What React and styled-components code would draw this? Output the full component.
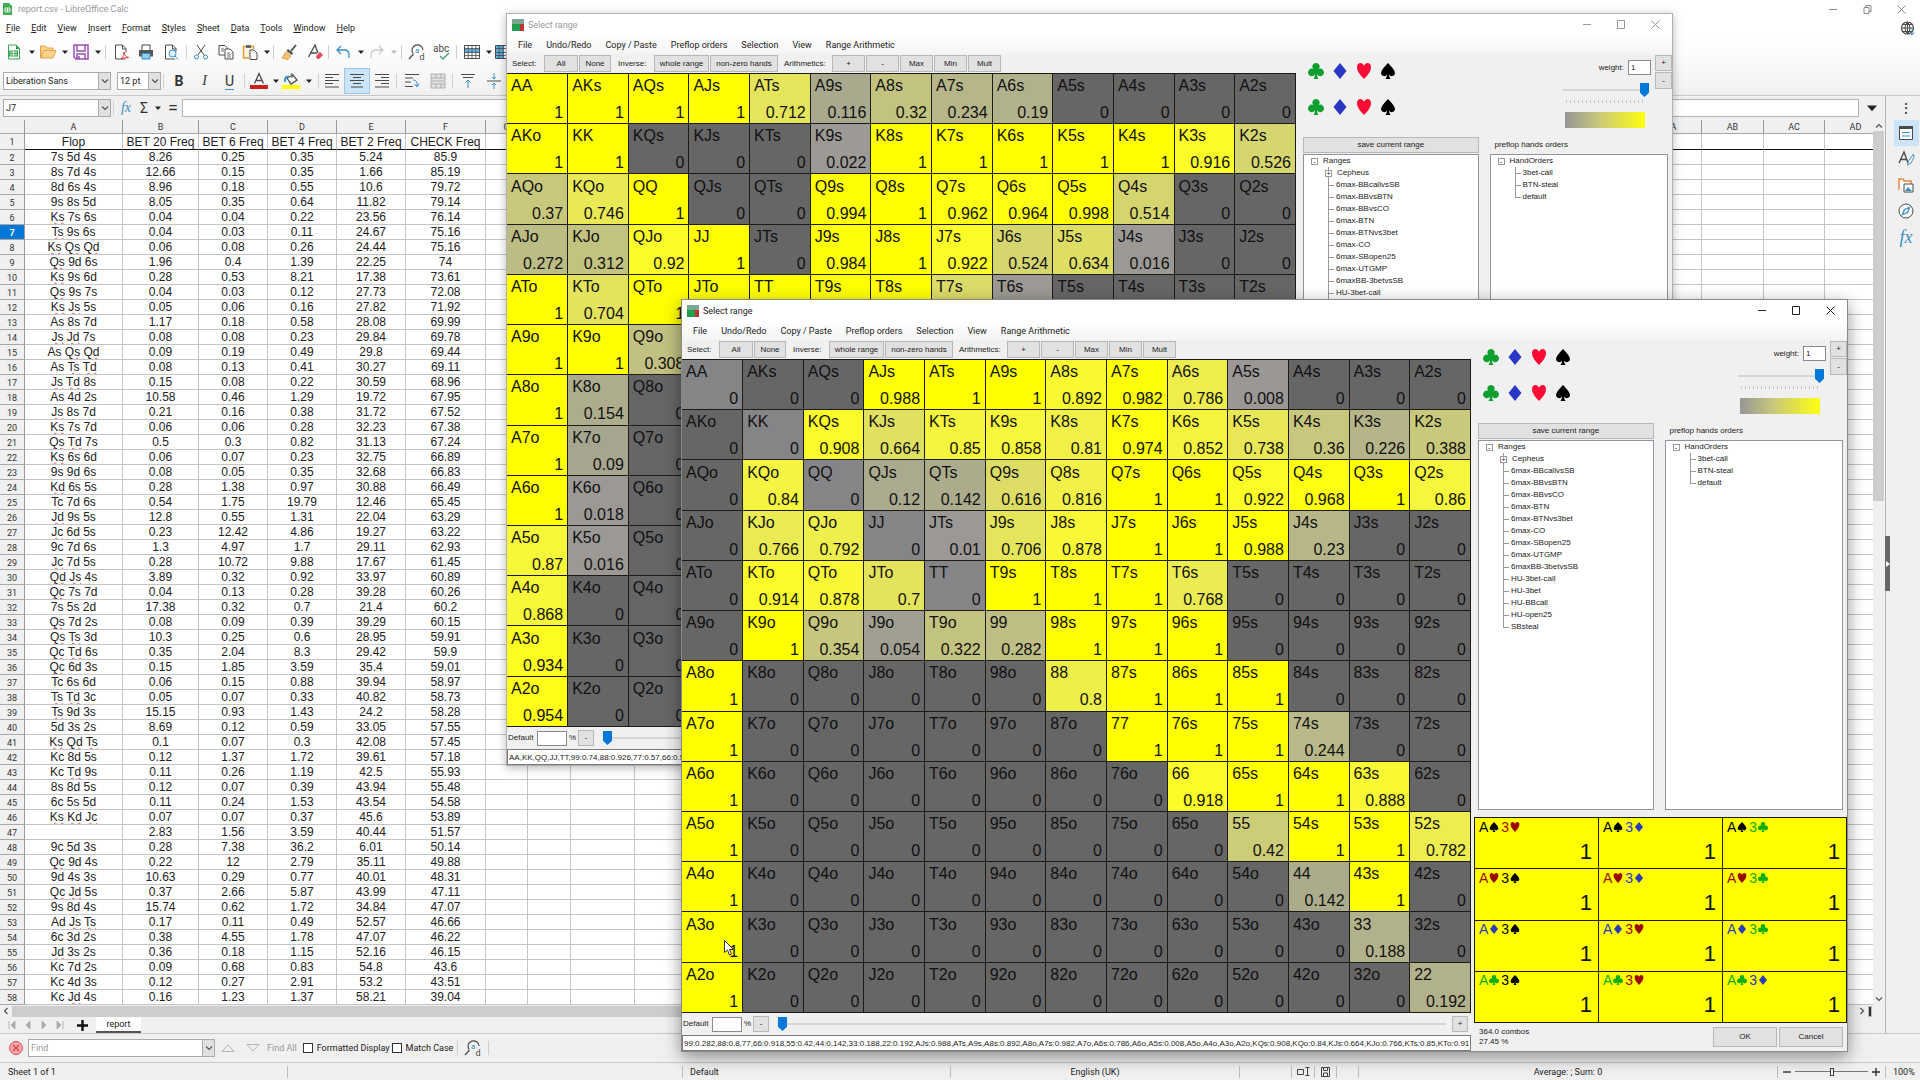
import React from "react";
import styled, { createGlobalStyle, css } from "styled-components";

const UI = `Roboto, "Open Sans", sans-serif`;
const ARIAL = `"Liberation Sans", Arial, sans-serif`;

const GlobalStyle = createGlobalStyle`
  *, *::before, *::after { box-sizing: border-box; }
  body { margin: 0; overflow: hidden; background: #f0f0f0; color: #222; font: 9px/12px ${UI}; }
  button, input, select { font: inherit; color: inherit; margin: 0; padding: 0; border-radius: 0; }
  button { background: none; border: 0; }
  svg { display: block; flex: none; }
  ul { list-style: none; margin: 0; padding: 0; }
`;

/* ---------- data ---------- */

const FLOPS = `7s 5d 4s|8.26|0.25|0.35|5.24|85.9
8s 7d 4s|12.66|0.15|0.35|1.66|85.19
8d 6s 4s|8.96|0.18|0.55|10.6|79.72
9s 8s 5d|8.05|0.35|0.64|11.82|79.14
Ks 7s 6s|0.04|0.04|0.22|23.56|76.14
Ts 9s 6s|0.04|0.03|0.11|24.67|75.16
Ks Qs Qd|0.06|0.08|0.26|24.44|75.16
Qs 9d 6s|1.96|0.4|1.39|22.25|74
Ks 9s 6d|0.28|0.53|8.21|17.38|73.61
Qs 9s 7s|0.04|0.03|0.12|27.73|72.08
Ks Js 5s|0.05|0.06|0.16|27.82|71.92
As 8s 7d|1.17|0.18|0.58|28.08|69.99
Js Jd 7s|0.08|0.08|0.23|29.84|69.78
As Qs Qd|0.09|0.19|0.49|29.8|69.44
As Ts Td|0.08|0.13|0.41|30.27|69.11
Js Td 8s|0.15|0.08|0.22|30.59|68.96
As 4d 2s|10.58|0.46|1.29|19.72|67.95
Js 8s 7d|0.21|0.16|0.38|31.72|67.52
Ks 7s 7d|0.06|0.06|0.28|32.23|67.38
Qs Td 7s|0.5|0.3|0.82|31.13|67.24
Ks 6s 6d|0.06|0.07|0.23|32.75|66.89
9s 9d 6s|0.08|0.05|0.35|32.68|66.83
Kd 6s 5s|0.28|1.38|0.97|30.88|66.49
Tc 7d 6s|0.54|1.75|19.79|12.46|65.45
Jd 9s 5s|12.8|0.55|1.31|22.04|63.29
Jc 6d 5s|0.23|12.42|4.86|19.27|63.22
9c 7d 6s|1.3|4.97|1.7|29.11|62.93
Jc 7d 5s|0.28|10.72|9.88|17.67|61.45
Qd Js 4s|3.89|0.32|0.92|33.97|60.89
Qc 7s 7d|0.04|0.13|0.28|39.28|60.26
7s 5s 2d|17.38|0.32|0.7|21.4|60.2
Qs 7d 2s|0.08|0.09|0.39|39.29|60.15
Qs Ts 3d|10.3|0.25|0.6|28.95|59.91
Qc Td 6s|0.35|2.04|8.3|29.42|59.9
Qc 6d 3s|0.15|1.85|3.59|35.4|59.01
Tc 6s 6d|0.06|0.15|0.88|39.94|58.97
Ts Td 3c|0.05|0.07|0.33|40.82|58.73
Ts 9d 3s|15.15|0.93|1.43|24.2|58.28
5d 3s 2s|8.69|0.12|0.59|33.05|57.55
Ks Qd Ts|0.1|0.07|0.3|42.08|57.45
Kc 8d 5s|0.12|1.37|1.72|39.61|57.18
Kc Td 9s|0.11|0.26|1.19|42.5|55.93
8s 8d 5s|0.12|0.07|0.39|43.94|55.48
6c 5s 5d|0.11|0.24|1.53|43.54|54.58
Ks Kd Jc|0.07|0.07|0.37|45.6|53.89
|2.83|1.56|3.59|40.44|51.57
9c 5d 3s|0.28|7.38|36.2|6.01|50.14
Qc 9d 4s|0.22|12|2.79|35.11|49.88
9d 4s 3s|10.63|0.29|0.77|40.01|48.31
Qc Jd 5s|0.37|2.66|5.87|43.99|47.11
9s 8d 4s|15.74|0.62|1.72|34.84|47.07
Ad Js Ts|0.17|0.11|0.49|52.57|46.66
6c 3d 2s|0.38|4.55|1.78|47.07|46.22
Jd 3s 2s|0.36|0.18|1.15|52.16|46.15
Kc 7d 2s|0.09|0.68|0.83|54.8|43.6
Kc 4d 3s|0.12|0.27|2.91|53.2|43.51
Kc Jd 4s|0.16|1.23|1.37|58.21|39.04`.split("\n").map((l) => l.split("|"));

const SHEET_COLUMNS = [
  ["A", 98], ["B", 76], ["C", 69], ["D", 69], ["E", 69], ["F", 80],
  ["G", 42], ["H", 43], ["I", 64], ["J", 61],
  ..."KLMNOPQRSTUVWXYZ".split("").map((c) => [c, 59]),
  ["AA", 62], ["AB", 62], ["AC", 61], ["AD", 62],
];
const HEADINGS = ["Flop", "BET 20 Freq", "BET 6 Freq", "BET 4 Freq", "BET 2 Freq", "CHECK Freq"];

const RANKS = "AKQJT98765432".split("");

const parse = (text) => text.trim().split("\n").map((l) => l.trim().split(/\s+/));

const BACK_RANGE = parse(`
1 1 1 1 0.712 0.116 0.32 0.234 0.19 0 0 0 0
1 1 0 0 0 0.022 1 1 1 1 1 0.916 0.526
0.37 0.746 1 0 0 0.994 1 0.962 0.964 0.998 0.514 0 0
0.272 0.312 0.92 1 0 0.984 1 0.922 0.524 0.634 0.016 0 0
1 0.704 1 1 1 1 1 0.6 0.02 0 0 0 0
1 1 0.308 0 0 0.74 1 1 0 0 0 0 0
1 0.154 0 0 0 0 0.926 1 1 0 0 0 0
1 0.09 0 0 0 0 0 0.57 1 1 0 0 0
1 0.018 0 0 0 0 0 0 0.5 1 1 0 0
0.87 0.016 0 0 0 0 0 0 0 0.4 1 1 0
0.868 0 0 0 0 0 0 0 0 0 0.3 1 0
0.934 0 0 0 0 0 0 0 0 0 0 0.2 0
0.954 0 0 0 0 0 0 0 0 0 0 0 0.2`);

const FRONT_RANGE = parse(`
0 0 0 0.988 1 1 0.892 0.982 0.786 0.008 0 0 0
0 0 0.908 0.664 0.85 0.858 0.81 0.974 0.852 0.738 0.36 0.226 0.388
0 0.84 0 0.12 0.142 0.616 0.816 1 1 0.922 0.968 1 0.86
0 0.766 0.792 0 0.01 0.706 0.878 1 1 0.988 0.23 0 0
0 0.914 0.878 0.7 0 1 1 1 0.768 0 0 0 0
0 1 0.354 0.054 0.322 0.282 1 1 1 0 0 0 0
1 0 0 0 0 0 0.8 1 1 1 0 0 0
1 0 0 0 0 0 0 1 1 1 0.244 0 0
1 0 0 0 0 0 0 0 0.918 1 1 0.888 0
1 0 0 0 0 0 0 0 0 0.42 1 1 0.782
1 0 0 0 0 0 0 0 0 0 0.142 1 0
1 0 0 0 0 0 0 0 0 0 0 0.188 0
1 0 0 0 0 0 0 0 0 0 0 0 0.192`);

const BACK_TEXT = "AA,KK,QQ,JJ,TT,99:0.74,88:0.926,77:0.57,66:0.5,55:0.4,44:0.3,33:0.2,22:0.2,AKs,AQs,AJs,ATs:0.712";
const FRONT_TEXT = "99:0.282,88:0.8,77,66:0.918,55:0.42,44:0.142,33:0.188,22:0.192,AJs:0.988,ATs,A9s,A8s:0.892,A8o,A7s:0.982,A7o,A6s:0.786,A6o,A5s:0.008,A5o,A4o,A3o,A2o,KQs:0.908,KQo:0.84,KJs:0.664,KJo:0.766,KTs:0.85,KTo:0.914,K9s:0.858,K9o";

const RANGES = ["6max-BBcallvsSB", "6max-BBvsBTN", "6max-BBvsCO", "6max-BTN", "6max-BTNvs3bet", "6max-CO", "6max-SBopen25", "6max-UTGMP", "6maxBB-3betvsSB", "HU-3bet-call", "HU-3bet", "HU-BBcall", "HU-open25", "SBsteal"];
const ORDERS = ["3bet-call", "BTN-steal", "default"];
const COMBOS = [["sh", "sd", "sc"], ["hs", "hd", "hc"], ["ds", "dh", "dc"], ["cs", "ch", "cd"]];

const STOPS = [[0, 154, 150, 150], [0.12, 170, 170, 142], [0.22, 180, 180, 138], [0.32, 195, 195, 128], [0.52, 214, 214, 112], [0.66, 224, 224, 98], [0.76, 234, 234, 84], [0.86, 246, 246, 60], [0.92, 252, 252, 40], [1, 255, 255, 0]];
function weightColor(v, pair) {
  if (v === 0) return pair ? "#858587" : "#666667";
  const i = Math.max(1, STOPS.findIndex((s) => s[0] >= v));
  const a = STOPS[i - 1];
  const b = STOPS[i];
  const t = (v - a[0]) / (b[0] - a[0]);
  const mix = [1, 2, 3].map((k) => Math.round(a[k] + (b[k] - a[k]) * t));
  return `rgb(${mix.join(",")})`;
}

/* ---------- drawings ---------- */

const SUIT_PATHS = {
  c: "M8 0a3.6 3.6 0 0 1 2.7 6A3.7 3.7 0 1 1 9 11.300q0 3.200 1.500 4.700h-5Q7 14.500 7 11.300A3.700 3.700 0 1 1 5.300 6 3.600 3.600 0 0 1 8 0z",
  d: "M8 0 14.500 8 8 16 1.500 8z",
  h: "M8 16Q1 9 1 4.500 1 0 4.500 0 7 0 8 2.800 9 0 11.500 0 15 0 15 4.500 15 9 8 16z",
  s: "M8 0Q15 7 15 10a3.200 3.200 0 0 1-6 1.500q0 3 1.600 4.500H5.400Q7 14.500 7 11.500A3.200 3.200 0 0 1 1 10Q1 7 8 0z",
};
const BRIGHT = { c: "#0f9f2f", d: "#2a36c4", h: "#fb0a34", s: "#000" };
const DARK = { c: "#0fae12", d: "#2a3cba", h: "#9c0a05", s: "#000" };

const Suit = ({ kind, size = 16, colors = BRIGHT }) => (
  <svg width={size} height={size} viewBox="0 0 16 16"><path d={SUIT_PATHS[kind]} fill={colors[kind]} /></svg>
);

const G = "#4a4a4a";
const B = "#3b8fc6";
const ICONS = {
  new: <><path d="M2.500 1h7.500l3.500 3.500v10.500h-11z" fill="#fff" stroke="#3aa655" /><path d="M10 1l4 4h-4z" fill="#2f9c4d" /><path d="M3 6.500h9v6H3z" fill="#3aa655" /><path d="M4 8.200h7M4 10.800h7M7.500 7v5" stroke="#fff" strokeWidth=".8" /></>,
  open: <path d="M.5 14V2h5l1.500 2h6v2.500M.5 14l3-7.500h12.500L13 14z" fill="#fbd28b" stroke="#e0a33f" />,
  save: <path d="M1 1h14v14H3l-2-2zM4 1v6h8V1M4 15v-5h8v5M6 12v3" fill="#fff" stroke="#9a4fb5" strokeWidth="1.500" />,
  pdf: <><path d="M12 15H2.500V1h7l3.500 3.500v4M9.500 1v4H13" fill="#fff" stroke={G} /><path d="M8 15c2-2 3.500-5 3-7 .3 3 2 5 4.500 5.500-3 0-5 .5-7.500 1.500z" fill="none" stroke="#d33" /></>,
  print: <><path d="M4 6V1h8v5" fill="#fff" stroke={G} /><path d="M1 6h14v6.500H1z" fill="#555" /><path d="M4 9.500h8V15H4z" fill="#8fd0f2" stroke={B} /></>,
  preview: <><path d="M12 15H2.500V1h7l3.500 3.500v3M9.500 1v4H13" fill="#fff" stroke={G} /><circle cx="9.500" cy="9.500" r="3.500" fill="#dff1fb" stroke={B} /><path d="M12 12l3 3.500" stroke={B} /></>,
  cut: <><path d="M4 1l7 10M12 1L5 11" stroke={G} fill="none" /><circle cx="3.500" cy="13" r="2" fill="none" stroke={B} /><circle cx="12.500" cy="13" r="2" fill="none" stroke={B} /></>,
  copy: <><path d="M1 1.500h6l2 2V11H1z" fill="#fff" stroke={G} /><path d="M7 5h5l3 3v7H7z" fill="#fff" stroke={G} /><path d="M9 9h3M9 11h4M9 13h4M3 5h3M3 7h3" stroke={G} strokeWidth=".8" /></>,
  paste: <><path d="M7 14H1.500V2.500h10V5" fill="#fdf0dc" stroke="#e09a3a" strokeWidth="1.400" /><path d="M4 1h5v3H4z" fill="#666" /><path d="M8 6h4l3 3v6.500H8z" fill="#fff" stroke={G} /></>,
  brush: <><path d="M15 1l-5 6" stroke={G} strokeWidth="1.800" /><path d="M7 5l5 4-1 2-5.500-4z" fill={G} /><path d="M5 8l5 4-3 3.500-6-1.500z" fill="#f7c277" stroke="#df9c3c" /></>,
  clear: <><path d="M1.500 13L8 1l3 8M4 9h6" stroke={G} fill="none" strokeWidth="1.300" /><path d="M9 12l4-4 3 3-4 4h-2z" fill="#e0485a" /></>,
  undo: <path d="M6 2L2 6l4 4M2 6h7q5 0 5 4.500V14" stroke={B} fill="none" strokeWidth="1.300" />,
  redo: <path d="M10 2l4 4-4 4M14 6H7q-5 0-5 4.500V14" stroke="#c9c9c9" fill="none" strokeWidth="1.300" />,
  find: <><path d="M4 9.500A5.500 5.500 0 1 1 14 6M4.500 10L0 15" stroke={G} fill="none" strokeWidth="1.200" /><text x="6" y="9" fontSize="8" fontFamily="Roboto" fill={B}>a</text><text x="10.500" y="16" fontSize="9" fontFamily="Roboto" fill={G}>d</text></>,
  spell: <><text x="-1" y="8" fontSize="10" fontFamily="Roboto" fill={G}>abc</text><path d="M6 12l3 3 6-6" stroke="#3aa67a" fill="none" strokeWidth="1.400" /></>,
  table: <><path d="M.5 1.500h15v13H.5z" fill="#fff" stroke={G} /><path d="M1 4.500h14v4H1z" fill="#5fb0e4" /><path d="M.5 4.500h15M.5 8.500h15M.5 11.500h15M4.200 1v13M8 1v13M11.800 1v13" stroke={G} strokeWidth=".8" /></>,
  column: <><path d="M.5 1.500h15v13H.5z" fill="#fff" stroke={G} /><path d="M1 2h8v12H1z" fill="#5fb0e4" /><path d="M.5 4.500h15M.5 8.500h15M.5 11.500h15M4.200 1v13M8 1v13M11.800 1v13" stroke={G} strokeWidth=".8" /></>,
  fontColor: <><path d="M3.500 10.500L8 .5l4.500 10M5 7.500h6" stroke={G} fill="none" strokeWidth="1.300" /><path d="M-1 12h18v4H-1z" fill="#c9211e" /></>,
  fill: <><path d="M4 5l6-3 4 5-6 4z" fill="#fff" stroke={G} strokeWidth="1.300" /><path d="M9 0v5" stroke={G} /><path d="M2 9q-1-6 4-5" stroke={B} fill="none" strokeWidth="2" /><path d="M-1 12h18v4H-1z" fill="#ff0" /></>,
  left: <path d="M1 1.500h14M1 4.500h8M1 7.500h14M1 10.500h8M1 14h14" stroke={G} />,
  center: <path d="M1 1.500h14M4 4.500h8M1 7.500h14M4 10.500h8M2 14h12" stroke={G} />,
  right: <path d="M1 1.500h14M7 4.500h8M1 7.500h14M7 10.500h8M1 14h14" stroke={G} />,
  wrap: <><path d="M1 1.500h14M1 5h8M1 9h6M1 13.500h8" stroke={G} /><path d="M9 7q5 0 4 6M10.500 11l2.500 3 2-3.500" stroke={B} fill="none" /></>,
  merge: <path d="M1 1h14v14H1zM1 5h14M1 11h14M6 1v4M11 1v4M6 11v4M11 11v4M2 8h12" stroke="#b0b0b0" fill="#e2e2e2" />,
  top: <><path d="M1 1.500h14M3 4.500h10" stroke={G} /><path d="M8 15V7M5.500 9.500L8 7l2.500 2.500" stroke={B} fill="none" /></>,
  middle: <><path d="M1 8h14" stroke={G} /><path d="M8 0v6M6 4l2 2 2-2M8 16v-6M6 12l2-2 2 2" stroke={B} fill="none" /></>,
  props: <><path d="M1.500 1.500h13v13h-13z" fill="#fff" stroke={G} /><path d="M1 1h14v3H1z" fill={G} /><path d="M4 7.500h8M4 11h8" stroke={B} /></>,
  styles: <><path d="M1 12L6 1l4 11M2.500 8.500h6" stroke={G} fill="none" strokeWidth="1.400" /><path d="M15.500 3l-5 7-1 4 3.500-2 3-6z" fill="#fff" stroke={B} /></>,
  gallery: <><path d="M1 13V2h4l1 2h7v3" fill="#fff" stroke="#e8823a" strokeWidth="1.400" /><path d="M6 7h9v8H6z" fill="#fff" stroke={G} /><path d="M7 14l3-4 4 4z" fill={B} /></>,
  compass: <><circle cx="8" cy="8" r="7" fill="#fff" stroke={G} /><path d="M11.500 4.500L9.500 9.500l-5 2 2-5z" fill="#fff" stroke={B} strokeWidth="1.300" /></>,
  globe: <><circle cx="7.500" cy="8" r="6" fill="none" stroke={G} strokeWidth="1.200" /><path d="M1.500 8h12M7.500 2v12M3 4.500h9M3 11.500h9M7.500 2q-5 6 0 12M7.500 2q5 6 0 12" stroke={G} fill="none" /><path d="M12 9v6M9.500 12.500L12 15l2.500-2.500" stroke={B} fill="none" /></>,
};
const Icon = ({ name, size = 16 }) => (
  <svg width={size} height={size} viewBox="0 0 16 16" fill="none" overflow="visible">{ICONS[name]}</svg>
);
const Caret = ({ color = "#222", size = 6 }) => (
  <svg width={size} height={size} viewBox="0 0 6 6"><path d="M0 1.500h6L3 5z" fill={color} /></svg>
);
const Chevron = ({ turn = 0, color = "#555" }) => (
  <svg width="8" height="8" viewBox="0 0 8 8"><path d="M1 2.500l3 3 3-3" transform={`rotate(${turn} 4 4)`} fill="none" stroke={color} strokeWidth="1.200" /></svg>
);
const WINDOW_GLYPHS = {
  min: "M0 4.500h8",
  max: "M.5.5h7v8h-7z",
  restore: "M1 2.500h5v6H1zM3 2.500V.5h5v6H6",
  close: "M.5.5l8 8M8.500.5l-8 8",
};
const WindowGlyph = ({ kind, color }) => (
  <svg width="9" height="9" viewBox="0 0 9 9"><path d={WINDOW_GLYPHS[kind]} fill="none" stroke={color} /></svg>
);

/* ---------- spreadsheet window ---------- */

const Page = styled.div`
  display: flex; flex-direction: column; height: 100vh; position: relative; overflow: hidden;
  background: #f0f0f0;
`;
const AppTitle = styled.header`
  display: flex; align-items: center; height: 18px; padding: 0 2px 0 3px; gap: 6px;
  background: #fff; color: #999;
`;
const Controls = styled.div`
  display: flex; margin-left: auto;
`;
const ControlButton = styled.button`
  width: 34px; height: 16px; display: grid; place-items: center;
`;
const AppMenu = styled.nav`
  display: flex; align-items: center; height: 19px; padding: 0 4px 0 6px; gap: 11px; background: #fff;
  & > :last-child { margin-left: auto; }
`;
const MenuButton = styled.button`
  line-height: 14px; white-space: nowrap;
  &::first-letter { text-decoration: ${(p) => (p.$mnemonic ? "underline" : "none")}; }
`;
const Toolbar = styled.div`
  display: flex; align-items: center; flex: none;
  height: ${(p) => p.$height}px;
  padding-left: ${(p) => p.$indent}px;
  background: ${(p) => p.$background};
  border-bottom: ${(p) => (p.$line ? "1px solid #c8c8c8" : "0")};
`;
const ToolButton = styled.button`
  flex: none; display: grid; place-items: center; height: 26px;
  width: ${(p) => p.$width}px;
  font-size: 14px;
  ${(p) => p.$active && css`background: #cce4f7; border: 1px solid #9cc8ea;`}
`;
const Divider = styled.span`
  flex: none; width: ${(p) => p.$width || 2}px; height: 14px;
  background: linear-gradient(#d0d0d0, #d0d0d0) center / 1px 100% no-repeat;
`;
const Spacer = styled.span`
  flex: none; width: ${(p) => p.$width}px;
`;
const Combo = styled.div`
  display: flex; flex: none; width: ${(p) => p.$width}px; height: 18px;
  margin-right: ${(p) => p.$after || 0}px;
  background: #fff; border: 1px solid #ababab; position: relative;
`;
const ComboField = styled.select`
  flex: 1; min-width: 0; appearance: none; border: 0; outline: 0; background: none; padding-left: 2px; font-size: 9px;
`;
const ComboInput = styled.input`
  flex: 1; min-width: 0; border: 0; outline: 0; background: none; padding-left: 2px; font-size: 9px;
  &::placeholder { color: #999; }
`;
const ComboArrow = styled.span`
  width: 12px; display: grid; place-items: center; background: #e1e1e1; border-left: 1px solid #ababab;
  pointer-events: none;
`;
const Letter = styled.span`
  font-size: ${(p) => (p.$large ? 18 : 14)}px; line-height: 16px;
  font-weight: ${(p) => (p.$bold ? 700 : 400)};
  font-style: ${(p) => (p.$italic ? "italic" : "normal")};
  font-family: ${(p) => (p.$serif ? `"Liberation Serif", serif` : UI)};
  color: ${(p) => p.$color || "#333"};
  border-bottom: ${(p) => (p.$under ? "1px solid #3b8fc6" : "0")};
`;
const Workspace = styled.main`
  flex: 1; min-height: 0; display: flex;
`;
const SheetColumn = styled.section`
  flex: 1; min-width: 0; display: flex; flex-direction: column;
`;
const FormulaBar = styled.div`
  display: flex; align-items: center; height: 24px; padding-left: 3px; flex: none;
`;
const FormulaInput = styled.input`
  flex: 1; height: 18px; border: 1px solid #b4b4b4; background: #fff; outline: 0;
`;
const GridRow = styled.div`
  flex: 1; min-height: 0; display: flex;
`;
const GridClip = styled.div`
  flex: 1; min-width: 0; overflow: hidden; background: #fff;
`;
const Sheet = styled.table`
  table-layout: fixed; width: 100%; border-collapse: separate; border-spacing: 0;
  font: 12px/13px ${ARIAL}; text-align: center; color: #222;
`;
const SheetRow = styled.tr`
  height: ${(p) => p.$height}px;
  & > td { border-bottom: 1px solid ${(p) => (p.$frozen ? "#111" : "#c4c4c4")}; }
`;
const Cell = styled.td`
  padding: 1px 0 0; border-right: 1px solid #c4c4c4; white-space: nowrap; overflow: hidden;
`;
const HeadCell = styled.th`
  padding: 1px 0 0; font: 9px/12px ${UI}; overflow: hidden;
  background: ${(p) => (p.$active ? "#0078d7" : "#f0f0f0")};
  color: ${(p) => (p.$active ? "#fff" : "#333")};
  font-weight: ${(p) => (p.$active ? 700 : 400)};
  border-right: 1px solid #999;
  border-bottom: 1px solid #a8a8a8;
`;
const Misspelt = styled.span`
  text-decoration: underline wavy #e06666 1px;
  text-underline-offset: 1px; text-decoration-skip-ink: none;
`;
const VScroll = styled.div`
  width: 12px; display: flex; flex-direction: column; align-items: center; padding: 2px 1px 2px 0;
  & > :last-child { margin-top: auto; }
`;
const VThumb = styled.div`
  width: 100%; height: 42%; margin-top: 1px; background: #cdcdcd;
`;
const HScroll = styled.div`
  flex: none; height: 12px; display: flex; align-items: center; padding: 0 13px 0 2px; gap: 2px;
  & > :nth-child(3) { margin-left: auto; }
`;
const HThumb = styled.div`
  width: 53%; height: 11px; background: #cdcdcd;
`;
const SplitGrip = styled.span`
  width: 4px; height: 11px; background: #333; border: 1px solid #bbb;
`;
const SheetTabs = styled.div`
  flex: none; height: 17px; display: flex; align-items: center; border-bottom: 1px solid #c8c8c8; padding-left: 4px;
`;
const TabNav = styled.button`
  width: ${(p) => p.$width || 16}px; display: grid; place-items: center;
`;
const SheetTab = styled.button`
  width: 45px; height: 16px; background: #fff; border-bottom: 2px solid #555;
`;
const Sidebar = styled.aside`
  width: 35px; flex: none; display: flex; flex-direction: column; align-items: center; position: relative;
  border-left: 1px solid #b4b4b4; border-bottom: 1px solid #c8c8c8; padding-left: 6px;
`;
const SideButton = styled.button`
  width: 25px; height: 26px; display: grid; place-items: center;
  background: ${(p) => (p.$active ? "#cce4f7" : "none")};
`;
const SideDots = styled.button`
  width: 25px; height: 24px; font-size: 14px; line-height: 24px;
`;
const SideGrip = styled.span`
  position: absolute; left: -1px; top: 47%; width: 5px; height: 55px; background: #666; display: grid; place-items: center;
`;
const FindBar = styled.form`
  flex: none; height: 29px; display: flex; align-items: center; padding-left: 9px; border-bottom: 1px solid #c8c8c8;
`;
const CloseButton = styled.button`
  width: 14px; height: 14px; margin-right: 5px;
`;
const FindAll = styled.button`
  color: #999; margin: 0 6px 0 1px; white-space: nowrap;
`;
const Check = styled.label`
  display: flex; align-items: center; gap: 4px; margin-right: 2px; white-space: nowrap;
  input { appearance: none; width: 10px; height: 10px; border: 1px solid #333; background: #fff; }
`;
const StatusBar = styled.footer`
  flex: none; height: 17px; display: grid; align-items: center;
  grid-template-columns: 287px 395px 268px 289px 52px 23px 22px 22px 1fr 108px 35px;
`;
const StatusCell = styled.div`
  display: flex; align-items: center; height: 12px; white-space: nowrap;
  justify-content: ${(p) => (p.$center ? "center" : "flex-start")};
  padding-left: ${(p) => (p.$center ? 0 : 7)}px;
  border-left: 1px solid ${(p) => (p.$first ? "transparent" : "#c0c0c0")};
`;
const ZoomSlider = styled.input`
  appearance: none; width: 73px; height: 9px; margin: 0 4px; outline: 0;
  background: linear-gradient(#777, #777) center / 100% 1px no-repeat;
  &::-webkit-slider-thumb { appearance: none; width: 4px; height: 8px; background: #f0f0f0; border: 1px solid #444; }
`;

/* ---------- range windows ---------- */

const Dialog = styled.section`
  position: absolute; left: ${(p) => p.$left}px; top: ${(p) => p.$top}px;
  width: 1167px; height: 753px; display: flex; flex-direction: column;
  border: 1px solid ${(p) => (p.$active ? "#8a8a8a" : "#b0b0b0")};
  background: #f0f0f0;
  box-shadow: 0 ${(p) => (p.$active ? "5px 16px" : "2px 9px")} rgba(0, 0, 0, ${(p) => (p.$active ? 0.42 : 0.28)});
`;
const DialogTitle = styled.header`
  display: flex; align-items: center; height: 21px; padding-left: 5px; gap: 4px; flex: none;
  background: #fff; color: ${(p) => (p.$active ? "#222" : "#999")};
`;
const DialogMenu = styled.nav`
  display: flex; align-items: center; height: 19px; padding-left: 11px; gap: 14px; flex: none;
  background: linear-gradient(#fff, #f4f4f4);
`;
const DialogBody = styled.div`
  flex: 1; min-height: 0; display: flex; font: 8px/10px ${ARIAL}; padding-top: 1px;
`;
const MatrixPane = styled.div`
  width: 789px; flex: none; display: flex; flex-direction: column;
`;
const ActionRow = styled.div`
  display: flex; height: 18px; padding: 0 0 1px 5px; gap: 1px; flex: none;
`;
const ActionLabel = styled.span`
  width: ${(p) => p.$width}px; padding-left: ${(p) => p.$indent || 0}px; line-height: 17px;
`;
const PushButton = styled.button`
  width: ${(p) => p.$width}px; height: ${(p) => p.$height}px; flex: none;
  background: #e1e1e1; border: 1px solid #b8b8b8; line-height: 10px; white-space: nowrap;
`;
const Matrix = styled.table`
  width: 100%; height: 654px; table-layout: fixed; border-collapse: collapse; flex: none;
  font: 16px/18px ${ARIAL}; color: #111;
`;
const HandCell = styled.td`
  padding: 3px 4px 1px; border: 1px solid #1c1c14; background: ${(p) => p.$color};
  border-left-width: ${(p) => (p.$edge ? 0 : 1)}px;
`;
const HandName = styled.span`
  display: block; margin-bottom: 9px;
`;
const HandWeight = styled.span`
  display: block; text-align: right;
`;
const DefaultRow = styled.div`
  flex: 1; display: flex; align-items: center; padding: 0 3px 0 1px;
  label { width: 29px; }
`;
const SmallInput = styled.input`
  width: ${(p) => p.$width}px; height: 15px; background: #fff; border: 1px solid #8a8a8a; outline: 0; padding: 0 2px;
`;
const Percent = styled.span`
  width: 11px; padding-left: 2px;
`;
const Slider = styled.input`
  appearance: none; outline: 0; height: 14px; min-width: 0;
  ${(p) => (p.$wide ? "flex: 1; margin: 0 6px 0 9px;" : "width: 86px; margin-right: 2px;")}
  background: linear-gradient(#d6d6d6, #d6d6d6) center / 100% 2px no-repeat;
  &::-webkit-slider-thumb {
    appearance: none; width: 9px; height: 14px; background: #0078d7;
    clip-path: polygon(0 0, 100% 0, 100% 70%, 50% 100%, 0 70%);
  }
`;
const RangeText = styled.input`
  flex: none; height: 16px; border: 1px solid #7a7a7a; background: #fff; outline: 0; padding: 0 1px; font-size: 8px;
`;
const SidePane = styled.div`
  flex: 1; min-width: 0; display: flex; flex-direction: column;
`;
const SideTop = styled.div`
  height: 82px; flex: none; display: flex; padding-left: 12px;
`;
const SuitGrid = styled.div`
  display: grid; grid-template-columns: repeat(4, 24px); grid-auto-rows: 36px; padding-top: 8px;
`;
const SuitButton = styled.button`
  width: 16px; height: 16px;
`;
const WeightBox = styled.div`
  margin-left: auto; display: flex; flex-direction: column; align-items: flex-end; padding-top: 5px; margin-right: 4px;
`;
const WeightRow = styled.div`
  display: flex; align-items: center; gap: 4px; margin-bottom: 8px;
`;
const Ticks = styled.div`
  width: 80px; height: 3px; margin: 3px 5px 9px 0;
  background: repeating-linear-gradient(90deg, #c6c6c6 0 1px, transparent 1px 4px);
`;
const Scale = styled.div`
  width: 80px; height: 16px; margin-right: 6px; background: linear-gradient(90deg, #969696, #c6c67e 40%, #ff1);
`;
const Stepper = styled.div`
  display: flex; flex-direction: column; gap: 1px;
`;
const Lists = styled.div`
  flex: 1; min-height: 0; display: grid; grid-template-columns: 176fr 179fr; column-gap: 11px; padding: 0 4px 0 7px;
`;
const ListColumn = styled.div`
  display: flex; flex-direction: column; min-height: 0;
`;
const ListCaption = styled.span`
  height: 17px; line-height: 16px; padding-left: 5px;
`;
const SaveButton = styled(PushButton)`
  width: 100%; margin-bottom: 1px;
`;
const Tree = styled.ul`
  flex: 1; background: #fff; border: 1px solid #8f959e; padding: 0 0 0 7px; line-height: 12px;
`;
const Expander = styled.button`
  width: 7px; height: 7px; border: 1px solid #999; background: #fff; display: grid; place-items: center; flex: none;
  font: 7px/5px ${ARIAL};
`;
const TreeRoot = styled.div`
  display: flex; align-items: center; gap: 5px; height: 12px;
`;
const Branch = styled.ul`
  padding-left: 17px;
`;
const Leaf = styled.li`
  display: flex; align-items: center; height: 12px; border-left: 1px solid ${(p) => (p.$last ? "transparent" : "#999")};
  &::before {
    content: ""; width: 6px; height: ${(p) => (p.$last ? 7 : 1)}px; margin-right: 2px; margin-left: -1px;
    border-bottom: 1px solid #999;
    ${(p) => p.$last && "border-left: 1px solid #999; align-self: flex-start;"}
    ${(p) => p.$box && "display: none;"}
  }
  ${Expander} { margin: 0 5px 0 -4px; }
`;
const Combos = styled.table`
  flex: none; width: calc(100% - 3px); height: 206px; margin: 7px 0 0 3px; table-layout: fixed; border-collapse: collapse;
  font: 14px/16px ${ARIAL}; color: #111;
`;
const ComboCell = styled.td`
  background: #ff0; border: 1px solid #1c1c00; padding: 0 6px 4px 4px;
`;
const ComboCards = styled.span`
  display: flex; align-items: center; gap: 1px; margin-bottom: 5px;
`;
const Rank = styled.span`
  color: ${(p) => p.$color};
  margin-left: ${(p) => (p.$second ? 1 : 0)}px;
`;
const ComboWeight = styled.span`
  display: block; text-align: right; font-size: 22px; line-height: 24px;
`;
const DialogFooter = styled.div`
  flex: none; height: 28px; display: flex; align-items: center; gap: 2px; padding: 0 4px 0 8px;
`;
const Totals = styled.div`
  flex: 1;
`;
const Pointer = styled.svg`
  position: absolute; left: 724px; top: 940px; pointer-events: none;
`;

function handName(r, c) {
  if (r === c) return RANKS[r] + RANKS[r];
  return r < c ? `${RANKS[r]}${RANKS[c]}s` : `${RANKS[c]}${RANKS[r]}o`;
}

function TreeView({ root, items, folder, label }) {
  return (
    <Tree aria-label={label}>
      <li>
        <TreeRoot><Expander aria-label="Collapse">-</Expander>{root}</TreeRoot>
        <Branch>
          {folder && <Leaf $box><Expander aria-label="Expand">+</Expander>{folder}</Leaf>}
          {items.map((t, i) => <Leaf key={t} $last={i === items.length - 1}>{t}</Leaf>)}
        </Branch>
      </li>
    </Tree>
  );
}

function RangeWindow({ id, left, top, active, range, text }) {
  const ink = active ? "#222" : "#999";
  return (
    <Dialog $left={left} $top={top} $active={active} aria-label="Select range">
      <DialogTitle $active={active}>
        <svg width="12" height="12" viewBox="0 0 12 12"><path d="M0 0h12v6H0z" fill="#7aa892" /><path d="M0 5h8v7H0z" fill="#1f9e4c" /><path d="M8 5h4v7H8z" fill="#c3302e" /></svg>
        <span>Select range</span>
        <Controls>
          {["min", "max", "close"].map((k) => <ControlButton key={k} aria-label={k}><WindowGlyph kind={k} color={ink} /></ControlButton>)}
        </Controls>
      </DialogTitle>
      <DialogMenu>
        {["File", "Undo/Redo", "Copy / Paste", "Preflop orders", "Selection", "View", "Range Arithmetic"].map((m) => <MenuButton key={m}>{m}</MenuButton>)}
      </DialogMenu>
      <DialogBody>
        <MatrixPane>
          <ActionRow>
            <ActionLabel $width={31}>Select:</ActionLabel>
            <PushButton $width={34} $height={17}>All</PushButton>
            <PushButton $width={32} $height={17}>None</PushButton>
            <ActionLabel $width={41} $indent={6}>Inverse:</ActionLabel>
            <PushButton $width={55} $height={17}>whole range</PushButton>
            <PushButton $width={68} $height={17}>non-zero hands</PushButton>
            <ActionLabel $width={52} $indent={5}>Arithmetics:</ActionLabel>
            {["+", "-", "Max", "Min", "Mult"].map((t) => <PushButton key={t} $width={33} $height={17}>{t}</PushButton>)}
          </ActionRow>
          <Matrix>
            <tbody>
              {range.map((row, r) => (
                <tr key={r}>
                  {row.map((v, c) => (
                    <HandCell key={c} $edge={c === 0} $color={weightColor(Number(v), r === c)}>
                      <HandName>{handName(r, c)}</HandName>
                      <HandWeight>{v}</HandWeight>
                    </HandCell>
                  ))}
                </tr>
              ))}
            </tbody>
          </Matrix>
          <DefaultRow>
            <label htmlFor={`${id}-default`}>Default</label>
            <SmallInput id={`${id}-default`} $width={30} />
            <Percent>%</Percent>
            <PushButton $width={16} $height={16}>-</PushButton>
            <Slider type="range" $wide min="0" max="100" defaultValue="0" aria-label="Default percent" />
            <PushButton $width={16} $height={16}>+</PushButton>
          </DefaultRow>
          <RangeText defaultValue={text} aria-label="Range text" />
        </MatrixPane>
        <SidePane>
          <SideTop>
            <SuitGrid>
              {["c", "d", "h", "s", "c", "d", "h", "s"].map((k, i) => <SuitButton key={i} aria-label={k}><Suit kind={k} /></SuitButton>)}
            </SuitGrid>
            <WeightBox>
              <WeightRow>
                <label htmlFor={`${id}-weight`}>weight:</label>
                <SmallInput id={`${id}-weight`} $width={23} defaultValue="1" />
              </WeightRow>
              <Slider type="range" min="0" max="1" defaultValue="1" aria-label="Weight" />
              <Ticks />
              <Scale />
            </WeightBox>
            <Stepper>
              <PushButton $width={17} $height={16}>+</PushButton>
              <PushButton $width={17} $height={17}>-</PushButton>
            </Stepper>
          </SideTop>
          <Lists>
            <ListColumn>
              <SaveButton $height={16}>save current range</SaveButton>
              <TreeView root="Ranges" folder="Cepheus" items={RANGES} label="Ranges" />
            </ListColumn>
            <ListColumn>
              <ListCaption>preflop hands orders</ListCaption>
              <TreeView root="HandOrders" items={ORDERS} label="Hand orders" />
            </ListColumn>
          </Lists>
          <Combos>
            <tbody>
              {COMBOS.map((row) => (
                <tr key={row[0]}>
                  {row.map(([a, b]) => (
                    <ComboCell key={a + b}>
                      <ComboCards>
                        <Rank $color={DARK[a]}>A</Rank><Suit kind={a} size={10} colors={DARK} />
                        <Rank $second $color={DARK[b]}>3</Rank><Suit kind={b} size={10} colors={DARK} />
                      </ComboCards>
                      <ComboWeight>1</ComboWeight>
                    </ComboCell>
                  ))}
                </tr>
              ))}
            </tbody>
          </Combos>
          <DialogFooter>
            <Totals><div>364.0 combos</div><div>27.45 %</div></Totals>
            <PushButton $width={64} $height={20}>OK</PushButton>
            <PushButton $width={64} $height={20}>Cancel</PushButton>
          </DialogFooter>
        </SidePane>
      </DialogBody>
    </Dialog>
  );
}

const FILE_TOOLS = [["new", 24], ["^", 11], ["open", 21], ["^", 13], ["save", 20], ["^", 13], ["|", 2], ["pdf", 30], ["print", 20], ["preview", 29], ["|", 2], ["cut", 28], ["copy", 22], ["paste", 26], ["^", 8], ["|", 4], ["brush", 28], ["clear", 24], ["|", 3], ["undo", 26], ["^", 10], ["redo", 22], ["~", 12], ["|", 2], ["find", 30], ["spell", 20], ["|", 8], ["table", 24], ["^", 9], ["column", 20]];
const FORMAT_TOOLS = [["|", 4], ["fontColor", 26], ["^", 8], ["fill", 22], ["^", 14], ["|", 4], ["left", 24], ["center", 26], ["right", 24], ["|", 4], ["wrap", 28], ["merge", 24], ["|", 4], ["top", 28], ["middle", 24]];

const Tools = ({ items }) => items.map(([kind, w], i) => {
  if (kind === "|") return <Divider key={i} $width={w} />;
  if (kind === "^" || kind === "~") return <ToolButton key={i} $width={w} aria-label="More"><Caret color={kind === "~" ? "#bbb" : "#222"} /></ToolButton>;
  return <ToolButton key={i} $width={w} $active={kind === "center"} aria-label={kind}><Icon name={kind} /></ToolButton>;
});

const Flop = ({ text }) => text.split(" ").map((card, i) => (
  <React.Fragment key={i}>
    {i > 0 && " "}
    {/^([KQJT][sd]|[QJ]c)$/.test(card) ? <Misspelt>{card}</Misspelt> : card}
  </React.Fragment>
));

const NAV_ARROWS = ["M2 1v8M8 1L4 5l4 4z", "M7 1L3 5l4 4z", "M3 1l4 4-4 4z", "M8 1v8M2 1l4 4-4 4z"];

export default function App() {
  return (
    <Page>
      <GlobalStyle />
      <AppTitle>
        <svg width="9" height="12" viewBox="0 0 9 12"><path d="M0 0h6l3 3v9H0z" fill="#3faa4f" /><path d="M2 5h5v4H2zM2 7h5M4.500 5v4" fill="none" stroke="#fff" strokeWidth=".8" /></svg>
        <span>report.csv - LibreOffice Calc</span>
        <Controls>
          {["min", "restore", "close"].map((k) => <ControlButton key={k} aria-label={k}><WindowGlyph kind={k} color="#888" /></ControlButton>)}
        </Controls>
      </AppTitle>
      <AppMenu>
        {["File", "Edit", "View", "Insert", "Format", "Styles", "Sheet", "Data", "Tools", "Window", "Help"].map((m) => <MenuButton key={m} $mnemonic>{m}</MenuButton>)}
        <MenuButton aria-label="Update"><Icon name="globe" /></MenuButton>
      </AppMenu>
      <Toolbar $height={30} $indent={2} $background="linear-gradient(#fff, #f9f9f9)"><Tools items={FILE_TOOLS} /></Toolbar>
      <Toolbar $height={29} $indent={3} $line $background="linear-gradient(#f9f9f9, #f1f1f1)">
        <Combo $width={108} $after={6}>
          <ComboField aria-label="Font name" defaultValue="Liberation Sans"><option>Liberation Sans</option></ComboField>
          <ComboArrow><Chevron /></ComboArrow>
        </Combo>
        <Combo $width={44}>
          <ComboField aria-label="Font size" defaultValue="12 pt"><option>12 pt</option></ComboField>
          <ComboArrow><Chevron /></ComboArrow>
        </Combo>
        <Divider $width={5} />
        <ToolButton $width={26}><Letter $bold>B</Letter></ToolButton>
        <ToolButton $width={25}><Letter $italic $serif>I</Letter></ToolButton>
        <ToolButton $width={25}><Letter $under>U</Letter></ToolButton>
        <Tools items={FORMAT_TOOLS} />
      </Toolbar>
      <Workspace>
        <SheetColumn>
          <FormulaBar>
            <Combo $width={108}>
              <ComboInput aria-label="Name box" defaultValue="J7" />
              <ComboArrow><Chevron /></ComboArrow>
            </Combo>
            <Divider $width={5} />
            <ToolButton $width={20}><Letter $italic $serif $color="#3b8fc6">fx</Letter></ToolButton>
            <ToolButton $width={16}><Letter>Σ</Letter></ToolButton>
            <ToolButton $width={12} aria-label="More"><Caret /></ToolButton>
            <ToolButton $width={18}><Letter $large>=</Letter></ToolButton>
            <FormulaInput aria-label="Formula" />
            <ToolButton $width={26} aria-label="Expand formula bar"><Caret size={10} /></ToolButton>
          </FormulaBar>
          <GridRow>
            <GridClip>
              <Sheet>
                <colgroup>
                  <col style={{ width: 25 }} />
                  {SHEET_COLUMNS.map(([n, w]) => <col key={n} style={{ width: w }} />)}
                </colgroup>
                <thead>
                  <SheetRow $height={14}>
                    <HeadCell />
                    {SHEET_COLUMNS.map(([n]) => <HeadCell key={n}>{n}</HeadCell>)}
                  </SheetRow>
                </thead>
                <tbody>
                  {[HEADINGS, ...FLOPS].map((row, r) => (
                    <SheetRow key={r} $height={r === 0 ? 16 : 15} $frozen={r === 0}>
                      <HeadCell $active={r === 6}>{r + 1}</HeadCell>
                      {SHEET_COLUMNS.map(([n], c) => (
                        <Cell key={n}>{c === 0 ? <Flop text={row[0]} /> : row[c]}</Cell>
                      ))}
                    </SheetRow>
                  ))}
                </tbody>
              </Sheet>
            </GridClip>
            <VScroll>
              <Chevron turn={180} />
              <VThumb />
              <Chevron />
            </VScroll>
          </GridRow>
          <HScroll>
            <Chevron turn={90} />
            <HThumb />
            <Chevron turn={-90} />
            <SplitGrip />
          </HScroll>
          <SheetTabs>
            {NAV_ARROWS.map((d) => (
              <TabNav key={d} aria-label="Scroll tabs"><svg width="10" height="10" viewBox="0 0 10 10"><path d={d} fill="#aaa" stroke="#aaa" strokeWidth=".8" /></svg></TabNav>
            ))}
            <TabNav $width={28} aria-label="Add sheet"><svg width="11" height="11" viewBox="0 0 11 11"><path d="M5.500 0v11M0 5.500h11" stroke="#111" strokeWidth="2.400" /></svg></TabNav>
            <SheetTab>report</SheetTab>
          </SheetTabs>
        </SheetColumn>
        <Sidebar>
          <SideDots aria-label="Settings">⋮</SideDots>
          <SideButton $active aria-label="Properties"><Icon name="props" /></SideButton>
          {["styles", "gallery", "compass"].map((n) => <SideButton key={n} aria-label={n}><Icon name={n} /></SideButton>)}
          <SideButton><Letter $italic $serif $large $color="#3b8fc6">fx</Letter></SideButton>
          <SideGrip><svg width="4" height="6" viewBox="0 0 4 6"><path d="M0 0l4 3-4 3z" fill="#fff" /></svg></SideGrip>
        </Sidebar>
      </Workspace>
      <FindBar onSubmit={(e) => e.preventDefault()}>
        <CloseButton type="button" aria-label="Close"><svg width="14" height="14" viewBox="0 0 14 14"><circle cx="7" cy="7" r="6.500" fill="#f4a3a8" stroke="#dc5860" /><path d="M4 4l6 6M10 4l-6 6" stroke="#d0444e" strokeWidth="1.300" /></svg></CloseButton>
        <Combo $width={187} $after={6}>
          <ComboInput placeholder="Find" aria-label="Find" />
          <ComboArrow><Chevron /></ComboArrow>
        </Combo>
        <TabNav type="button" $width={14} aria-label="Find previous"><svg width="14" height="8" viewBox="0 0 14 8"><path d="M1 7.500h12L7 1z" fill="none" stroke="#b5b5b5" /></svg></TabNav>
        <Spacer $width={11} />
        <TabNav type="button" $width={14} aria-label="Find next"><svg width="14" height="8" viewBox="0 0 14 8"><path d="M1 .5h12L7 7z" fill="none" stroke="#b5b5b5" /></svg></TabNav>
        <Spacer $width={6} />
        <FindAll type="button">Find All</FindAll>
        <Check><input type="checkbox" />Formatted Display</Check>
        <Check><input type="checkbox" />Match Case</Check>
        <Divider $width={4} />
        <ToolButton type="button" $width={28} aria-label="Find and replace"><Icon name="find" /></ToolButton>
        <Divider $width={2} />
      </FindBar>
      <StatusBar>
        <StatusCell $first>Sheet 1 of 1</StatusCell>
        <StatusCell />
        <StatusCell>Default</StatusCell>
        <StatusCell $center>English (UK)</StatusCell>
        <StatusCell />
        <StatusCell $center><svg width="13" height="9" viewBox="0 0 13 9"><path d="M.5 2.500h6v5h-6zM8.500.5h4M8.500 8.500h4M10.500.5v8" fill="none" stroke="#444" /></svg></StatusCell>
        <StatusCell $center><svg width="9" height="10" viewBox="0 0 9 10"><path d="M.5.5h8v9h-8zM2.500.5v3h4v-3M2.500 9V6h4v3" fill="none" stroke="#444" /></svg></StatusCell>
        <StatusCell />
        <StatusCell $center>Average: ; Sum: 0</StatusCell>
        <StatusCell $center>
          <svg width="8" height="8" viewBox="0 0 8 8"><path d="M0 4h8" stroke="#333" strokeWidth="1.400" /></svg>
          <ZoomSlider type="range" aria-label="Zoom" defaultValue="50" />
          <svg width="8" height="8" viewBox="0 0 8 8"><path d="M0 4h8M4 0v8" stroke="#333" strokeWidth="1.400" /></svg>
        </StatusCell>
        <StatusCell>100%</StatusCell>
      </StatusBar>
      <RangeWindow id="back" left={506} top={13} range={BACK_RANGE} text={BACK_TEXT} />
      <RangeWindow id="front" left={681} top={299} active range={FRONT_RANGE} text={FRONT_TEXT} />
      <Pointer width="11" height="16" viewBox="0 0 11 16"><path d="M.5.5v12l3-2.500 2 5 2-1-2-4.500h4z" fill="#fff" stroke="#333" /></Pointer>
    </Page>
  );
}
